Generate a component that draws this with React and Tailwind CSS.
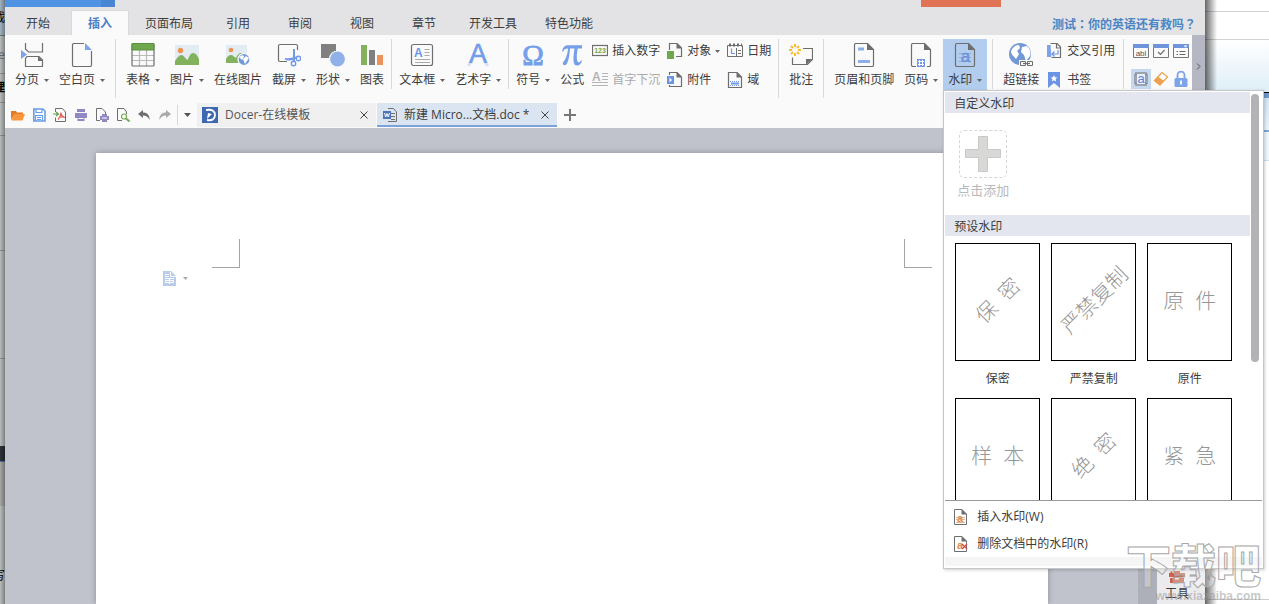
import React from 'react';

const Caret = ({ className = 'text-[#666]' }) => (
  <svg className={className} width="5" height="3" viewBox="0 0 5 3" fill="currentColor">
    <path d="M0 0h5L2.5 3z" />
  </svg>
);

const Icon = ({ children, size = 24, width }) => (
  <svg
    className="shrink-0"
    width={width || size}
    height={size}
    viewBox={`0 0 ${width || size} ${size}`}
    fill="none"
    stroke="#6e6e6e"
    strokeWidth="1.2"
  >
    {children}
  </svg>
);

const icons = {
  pageBreak: (
    <Icon>
      <path d="M5.500 0v6l3 3h14V0M7 13.500h12l3.500 3.500v6.500h-17v-8z" />
      <path d="M18 13v5h5z" fill="#6e6e6e" stroke="none" />
      <path d="M1 7l6 4.500L1 16z" fill="#7da3ea" stroke="none" />
    </Icon>
  ),
  blankPage: (
    <Icon>
      <path d="M14 .5H4A1.500 1.500 0 0 0 2.500 2v20A1.500 1.500 0 0 0 4 23.500h16a1.500 1.500 0 0 0 1.500-1.500V8" />
      <path d="M15 0v7h7z" fill="#7da3ea" stroke="none" />
    </Icon>
  ),
  table: (
    <Icon>
      <path d="M1 12.500h22M1 17.500h22M8.500 7v16M15.500 7v16" stroke="#b9b9b9" />
      <rect x="1" y="1" width="22" height="22" rx="1" />
      <path d="M1 .5h22v6.500H1z" fill="#6ea84c" stroke="#5c8f40" strokeWidth="1" />
    </Icon>
  ),
  picture: (
    <Icon>
      <g stroke="none">
        <path d="M0 2h24v20H0z" fill="#e3ebf3" />
        <circle cx="5.500" cy="7.500" r="2.700" fill="#f09250" />
        <path d="M0 22v-4c2-3 4-6 6.500-6s4 4 6 5c2-4 3-7 5.500-7 3 0 4.500 3 6 6v6z" fill="#83b25f" />
      </g>
    </Icon>
  ),
  onlinePicture: (
    <Icon>
      <g stroke="none">
        <path d="M0 2h21v18H0z" fill="#e3ebf3" />
        <circle cx="5" cy="7" r="2.300" fill="#f09250" />
        <path d="M0 20v-4c2-3 3-4 5-4s3 2 5 3c1-3 3-5 5-5l4 2v8z" fill="#83b25f" />
        <circle cx="18" cy="16.500" r="6" fill="#7299d6" stroke="#fafafa" />
        <path d="M13 14l4-2 1 2-2 3zM17 16l3-3 3 2-2 3-2 3z" fill="#fff" />
      </g>
    </Icon>
  ),
  capture: (
    <Icon>
      <path d="M10 18.500H3A1.500 1.500 0 0 1 1.500 17V3A1.500 1.500 0 0 1 3 1.500h16A1.500 1.500 0 0 1 20.500 3v4" />
      <g stroke="#7299e8" strokeWidth="1.400">
        <path d="M17 6v12M8 15.500c3 2 6 1 11-1" strokeWidth="2" />
        <circle cx="16.500" cy="20.500" r="2.200" />
        <circle cx="21.500" cy="15.500" r="2.200" />
      </g>
    </Icon>
  ),
  shapes: (
    <Icon>
      <path d="M0 1h15v14H0z" fill="#808080" stroke="none" />
      <circle cx="16.500" cy="16" r="8" fill="#8fb0e8" stroke="#fafafa" />
    </Icon>
  ),
  chart: (
    <Icon>
      <g stroke="none">
        <path d="M1 2h6v20H1z" fill="#83b25f" />
        <path d="M9 7h6v15H9z" fill="#808080" />
        <path d="M17 12h6v10h-6z" fill="#ee925c" />
      </g>
    </Icon>
  ),
  textBox: (
    <Icon>
      <rect x="1.500" y="1.500" width="21" height="21" rx="2" />
      <path d="M14.500 6.500h5M14.500 9.500h5M14.500 12.500h5M5 16.500h15M5 19.500h15" stroke="#aaa" strokeWidth="1" />
      <text x="4" y="13.500" fontFamily="Liberation Sans" fontSize="12" fontWeight="700" fill="#6b95e4" stroke="none">A</text>
    </Icon>
  ),
  wordArt: (
    <Icon>
      <text x="12" y="19.500" textAnchor="middle" fontFamily="Liberation Sans" fontSize="27" fill="#739ce9" stroke="#739ce9" strokeWidth=".6">A</text>
      <path d="M3.500 20.500l-1 2.500M20.500 20.500l1 2.500" stroke="#d3dff8" strokeWidth="3" />
    </Icon>
  ),
  symbol: (
    <Icon>
      <text x="12" y="22" textAnchor="middle" fontFamily="Liberation Serif" fontSize="29" fill="#769fea" stroke="#769fea" strokeWidth=".9">Ω</text>
    </Icon>
  ),
  formula: (
    <Icon>
      <path
        d="M2 8.500C3 4 5 2.300 8 2.300h14v3.200h-4.300c-1 5-1.200 10-.4 12.500.8 2 2.700 1.500 3.700-.5h1c-.8 3.500-2.500 5-5 5-4.500 0-4-7-2.500-17H10c-.5 6-1 11-3 15-1.500 2.800-5 2-4-1.200C6 16 7.500 12 8 5.500 5 5.500 4 6.500 3 8.500z"
        fill="#769fea"
        stroke="none"
      />
    </Icon>
  ),
  comment: (
    <Icon>
      <path d="M14 5.500h9.500v11l-5 5h-15v-7" />
      <path d="M17 22v-6h6.500z" fill="#6e6e6e" stroke="none" />
      <path d="M6 1v3M6 10v3M0 7h3M9 7h3M2 3l2 2M8 9l2 2M10 3L8 5M4 9l-2 2" stroke="#fbbd2d" strokeWidth="2" />
    </Icon>
  ),
  headerFooter: (
    <Icon>
      <path d="M15.500.5H4A1.500 1.500 0 0 0 2.500 2v20A1.500 1.500 0 0 0 4 23.500h16a1.500 1.500 0 0 0 1.500-1.500V6.500z" />
      <path d="M15 0v7h7z" fill="#6e6e6e" stroke="none" />
      <path d="M6 6h6M6 18.500h12" stroke="#8caeea" strokeWidth="3" />
    </Icon>
  ),
  pageNumber: (
    <Icon>
      <path d="M7 23.500H4A1.500 1.500 0 0 1 2.500 22V2A1.500 1.500 0 0 1 4 .5h11.500l6 6V22a1.500 1.500 0 0 1-1.500 1.500h-2" />
      <path d="M15 0v7h7z" fill="#6e6e6e" stroke="none" />
      <path d="M8 16h8v8H8z" fill="#7299e8" stroke="none" />
      <path d="M10.500 17v6M13.500 17v6M9 18.500h6M9 21.500h6" stroke="#fff" strokeWidth="1" />
    </Icon>
  ),
  watermark: (
    <Icon>
      <path d="M15.500.5H4A1.500 1.500 0 0 0 2.500 2v20A1.500 1.500 0 0 0 4 23.500h16a1.500 1.500 0 0 0 1.500-1.500V6.500z" />
      <path d="M15 0v7h7z" fill="#6e6e6e" stroke="none" />
      <path d="M6 10.500h12M6 14.500h12M6 18.500h12" stroke="#9aabc6" strokeWidth="1" />
      <text x="12.500" y="19" textAnchor="middle" fontFamily="Liberation Sans" fontSize="17" fill="#6a92dd" stroke="#6a92dd" strokeWidth=".4">a</text>
    </Icon>
  ),
  hyperlink: (
    <Icon>
      <circle cx="11" cy="11" r="11" fill="#7299d6" stroke="none" />
      <path d="M2 8c2-4 5-6 8-6l1 3-3 3 2 3-3 5c-2-3-5-4-5-8zM13 4l5-1c4 4 4 8 3 10l-4 5-2-6-3-3z" fill="#fff" stroke="none" />
      <path d="M10 17h14v7H10z" fill="#fafafa" stroke="none" />
      <path d="M11.500 18.500h5v4h-5zM18.500 18.500h5v4h-5z" strokeWidth="1" />
      <path d="M14 20.500h7" />
    </Icon>
  ),
  insertNumber: (
    <Icon size={16}>
      <rect x=".5" y="2.500" width="15" height="10" />
      <text x="8" y="10" textAnchor="middle" fontFamily="Liberation Sans" fontSize="7" fontWeight="700" fill="#6ea84c" stroke="none">123</text>
    </Icon>
  ),
  dropCap: (
    <Icon size={16}>
      <path d="M10 1.500h6M10 4.500h6M10 7.500h6M0 10.500h16M0 13.500h16" stroke="#b4b4b4" />
      <text x="0" y="9" fontFamily="Liberation Sans" fontSize="12" fontWeight="700" fill="#b4b4b4" stroke="none">A</text>
    </Icon>
  ),
  object: (
    <Icon size={16}>
      <path d="M2.500 7V.5H10L14.500 5v8.500H9" />
      <path d="M9.500 0v5.500H15z" fill="#6e6e6e" stroke="none" />
      <path d="M0 8h7v8H0z" fill="#6ea84c" stroke="none" />
    </Icon>
  ),
  attachment: (
    <Icon size={16}>
      <path d="M2.500 3V.5H10L14.500 5v9.500h-12V13" />
      <path d="M9.500 0v5.500H15z" fill="#6e6e6e" stroke="none" />
      <path d="M0 4h7v8H0z" fill="#6b95e4" stroke="none" />
      <path d="M2.500 5.500v5L5 8z" fill="#fff" stroke="none" />
    </Icon>
  ),
  date: (
    <Icon size={16}>
      <path d="M.5 2.500h15v11H.5zM9.500 5v8M11 7.500h3M11 10.500h3" strokeWidth="1" />
      <path d="M2 2h13" strokeWidth="3" strokeDasharray="2 2" />
      <path d="M4.500 5.500v5H8" stroke="#7299e8" />
    </Icon>
  ),
  field: (
    <Icon size={16}>
      <path d="M1.500.5H10L14.500 5v10.500h-13z" />
      <path d="M9.500 0v5.500H15z" fill="#6e6e6e" stroke="none" />
      <path d="M3 9.500h10M3 13.500h10" stroke="#7299e8" strokeDasharray="1 1" strokeWidth="1" />
      <path d="M4 11.500h8" stroke="#7299e8" strokeWidth="2" />
    </Icon>
  ),
  crossRef: (
    <Icon size={16}>
      <path d="M0 2h9v12H0z" fill="#7da3ea" stroke="none" />
      <path d="M3.500.5H10L13.500 4v10.500h-9" fill="#fafafa" />
      <path d="M9.500 1v4h4" />
      <path d="M11 7v4H5M7.500 8.500L5 11l2.500 2.500" stroke="#6b95e4" />
    </Icon>
  ),
  bookmark: (
    <Icon size={16}>
      <path d="M1 0h12v16l-6-5-6 5z" fill="#6b95e4" stroke="none" />
      <path d="M7 3l1 2.200 2.300.3-1.700 1.600.5 2.400L7 8.300 4.900 9.500l.5-2.400-1.700-1.600L6 5.200z" fill="#fff" stroke="none" />
    </Icon>
  ),
  textField: (
    <Icon size={16}>
      <path d="M.5 1.500h15v13H.5z" stroke="#777" strokeWidth="1" />
      <path d="M0 1h16v4H0z" fill="#6f94dc" stroke="none" />
      <text x="8" y="13" textAnchor="middle" fontFamily="Liberation Sans" fontSize="8" fill="#555" stroke="none">abl</text>
    </Icon>
  ),
  checkField: (
    <Icon size={16}>
      <path d="M.5 1.500h15v13H.5z" stroke="#777" strokeWidth="1" />
      <path d="M0 1h16v4H0z" fill="#6f94dc" stroke="none" />
      <path d="M5 9l2.500 2.500L11.500 7" />
    </Icon>
  ),
  listField: (
    <Icon size={16}>
      <path d="M.5 1.500h15v13H.5z" stroke="#777" strokeWidth="1" />
      <path d="M0 1h16v4H0z" fill="#6f94dc" stroke="none" />
      <path d="M10.500 2.500h4l-2 2z" fill="#fff" stroke="none" />
      <path d="M3.500 8.500H5M6.500 8.500h6M3.500 11.500H5M6.500 11.500h6" stroke="#666" />
    </Icon>
  ),
  fieldShading: (
    <Icon size={16}>
      <rect x="2.500" y="2.500" width="11" height="11" stroke="#6e6e6e" strokeWidth="3" strokeDasharray="1 1" />
      <path d="M4 3h8v10H4z" fill="#e8f0fb" stroke="none" />
      <text x="8" y="12" textAnchor="middle" fontFamily="Liberation Sans" fontSize="13" fill="#5583d4" stroke="none">a</text>
    </Icon>
  ),
  eraser: (
    <Icon size={16}>
      <path d="M9 1.500L14.500 6 7 14 1.500 9.500z" fill="#fff" stroke="#eda24f" strokeLinejoin="round" />
      <path d="M5 5.500L11 10l-4 4.500-6-4.500z" fill="#eda24f" stroke="none" />
    </Icon>
  ),
  lock: (
    <Icon size={16}>
      <path d="M4.500 8V4a3.500 3.500 0 0 1 7 0v4" stroke="#7da3ea" strokeWidth="1.800" />
      <rect x="1.500" y="7" width="13" height="9" rx="1.500" fill="#7da3ea" stroke="none" />
      <path d="M8 9.500v4" stroke="#fff" strokeWidth="1.800" />
    </Icon>
  ),
};

const quickIcons = [
  ['打开', <Icon size={14}><path d="M0 12V3h5l1 1.500h6V6H4z" fill="#e57a24" stroke="none" /><path d="M3.500 6H14l-2.500 6.500H.5z" fill="#f9963c" stroke="none" /></Icon>],
  ['保存', <Icon size={14}><path d="M1.800 1h9L13 3v10H1.800z" stroke="#6b9bea" strokeWidth="1.600" fill="#fff" /><path d="M4 1v3.500h6V1M3.500 13V7.500h7V13M5 9.500h4M5 11.500h4" stroke="#6b9bea" /></Icon>],
  ['输出为PDF', <Icon size={14}><path d="M2.500 4V.5h7l3 3.500v9.500h-10v-4" strokeWidth="1" /><path d="M0 6h5M3 4l2.500 2L3 8" stroke="#5fa052" /><path d="M8 4.500c0 3-1 5-3 7M8 6c.5 2 2 3 4 3.500M6 9.500l5-1" stroke="#e0564d" /></Icon>],
  ['打印', <Icon size={14}><path d="M3 1h8v3H3zM1 5h12v5H1zM3.500 9h7v4h-7z" fill="#8f88c4" stroke="none" /><path d="M4.500 10.500h5" stroke="#fff" strokeWidth="1" /></Icon>],
  ['打印预览', <Icon size={14}><path d="M5 12.500H1.500V.5H7L10.500 4v2" strokeWidth="1" /><path d="M7 6h5v2h2v4h-2v2H7v-2H5V8h2z" fill="#8f88c4" stroke="none" /><path d="M7 10h5" stroke="#fff" strokeWidth="1" /></Icon>],
  ['查找', <Icon size={14}><path d="M6 12.500H1.500V.5H8L10.500 4v2" strokeWidth="1" /><circle cx="8" cy="8.500" r="2.500" stroke="#74aa53" /><path d="M10 10.500l3.500 3" stroke="#74aa53" strokeWidth="2" /></Icon>],
  ['撤销', <Icon size={14}><path d="M6 2L1 6l5 4V7.500c3 0 5 1 6.500 4.500C13 7 10 4.500 6 4.500z" fill="#6e6e6e" stroke="none" /></Icon>],
  ['恢复', <Icon size={14}><path d="M8 2l5 4-5 4V7.500c-3 0-5 1-6.500 4.500C1 7 4 4.500 8 4.500z" fill="#aaa" stroke="none" /></Icon>],
];

const tabs = ['开始', '插入', '页面布局', '引用', '审阅', '视图', '章节', '开发工具', '特色功能'];

const BigButton = ({ icon, label, caret, active }) => (
  <button
    className={`flex h-[51px] flex-col items-center gap-[5px] px-[5px] pt-1 ${active ? 'bg-[#b2cdee]' : ''}`}
  >
    {icons[icon]}
    <span className="flex items-center gap-[5px]">
      {label}
      {caret && <Caret />}
    </span>
  </button>
);

const SmallButton = ({ icon, label, caret, disabled }) => (
  <button disabled={disabled} className={`flex h-4 items-center gap-1 ${disabled ? 'text-[#aaa]' : ''}`}>
    {icons[icon]}
    {label}
    {caret && <Caret />}
  </button>
);

const SmallColumn = ({ children }) => (
  <div className="flex flex-col items-start gap-[13px] pt-1">{children}</div>
);

const Divider = ({ tall }) => <div className={`w-px bg-[#d9d9db] ${tall ? 'h-[59px]' : 'h-[50px]'}`} />;

const TabBar = () => (
  <header className="bg-[#e3e3e5]">
    <div className="flex h-[7px] justify-between">
      <div className="flex w-[110px] bg-[#5193e3]">
        <div className="ml-auto w-3.5 bg-[#4886d4]" />
      </div>
      <div className="mr-[204px] w-20 bg-[#e07355]" />
    </div>
    <nav className="flex h-7 items-end pl-0.5">
      {tabs.map((tab) => (
        <button
          key={tab}
          className={`mx-0.5 h-[25px] min-w-[58px] px-3 pt-0.5 ${
            tab === '插入' ? 'border border-b-0 border-[#d8d8da] bg-[#fafafa] font-bold text-[#4a80c6]' : ''
          }`}
        >
          {tab}
        </button>
      ))}
      <a
        href="#test"
        className="ml-auto flex h-[25px] items-center pr-[9px] pt-0.5 font-['Noto_Sans_CJK_TC',sans-serif] font-bold text-[#4a86c6]"
      >
        测试：你的英语还有救吗？
      </a>
    </nav>
  </header>
);

const presets = [
  { name: '保密', text: '保 密', rotated: true },
  { name: '严禁复制', text: '严禁复制', rotated: true },
  { name: '原件', text: '原 件' },
  { name: '样本', text: '样 本' },
  { name: '绝密', text: '绝 密', rotated: true },
  { name: '紧急', text: '紧 急' },
];

const MenuDocIcon = ({ remove }) => (
  <Icon size={16}>
    <path d="M1.500.5H9L13.500 5v10.500h-12z" strokeWidth="1" />
    <path d="M8.500 0v5.500H14z" fill="#6e6e6e" stroke="none" />
    <text x="7" y="13" textAnchor="middle" fontFamily="Liberation Sans" fontSize="11" fontWeight="700" fill="#e08a45" stroke="none">a</text>
    {remove ? (
      <path d="M9 8l5 5M14 8l-5 5" stroke="#d9493b" />
    ) : (
      <path d="M3 8.500h9M3 10.500h9M3 13.500h9" stroke="#e0a070" strokeWidth=".8" />
    )}
  </Icon>
);

const WatermarkMenu = () => (
  <div className="absolute left-0 top-full z-10 w-[321px] border border-[#c6c6c8] bg-white p-px shadow-[1px_1px_3px_#0003]">
    <div className="flex h-[409px] overflow-hidden border-b border-[#999]">
      <div className="flex-1">
        <h3 className="h-[21px] bg-[#e3e6ee] pl-[9px] pt-px leading-[21px]">自定义水印</h3>
        <div className="flex h-[102px] px-3 pt-[17px]">
          <button className="flex flex-col items-center gap-1 text-[13px] text-[#b8b8ba]">
            <span className="flex size-12 items-center justify-center rounded-[5px] border border-dashed border-[#d6d6d6]">
              <svg width="36" height="36" viewBox="0 0 36 36">
                <path d="M13.500.5h9v13h13v8h-13v14h-9v-14H.5v-8h13z" fill="#d8d8d6" stroke="#c9c9c7" />
              </svg>
            </span>
            点击添加
          </button>
        </div>
        <h3 className="h-[21px] bg-[#e3e6ee] pl-[9px] pt-px leading-[21px]">预设水印</h3>
        <div className="grid grid-cols-[repeat(3,85px)] gap-x-[11px] gap-y-[11px] pl-2.5 pt-[7px]">
          {presets.map((preset) => (
            <button key={preset.name} className="flex flex-col items-center gap-2.5">
              <span className="flex h-[118px] w-full items-center justify-center border border-black pb-1 text-[21px] font-light text-[#979797]">
                <span className={`whitespace-nowrap ${preset.rotated ? '-rotate-45' : ''}`}>
                  {preset.text.split(' ').map((part, i) => (
                    <span key={part} className={i > 0 ? 'ml-[11px]' : ''}>{part}</span>
                  ))}
                </span>
              </span>
              {preset.name}
            </button>
          ))}
        </div>
      </div>
      <div className="w-3 pl-px pt-0.5">
        <div className="h-[268px] w-2 rounded-full bg-[#b3b3b5]" />
      </div>
    </div>
    <div className="pt-0.5">
      <button className="flex h-[27px] w-full items-center gap-2 pl-2">
        <MenuDocIcon />
        插入水印(W)
      </button>
      <button className="flex h-[27px] w-full items-center gap-2 pl-2">
        <MenuDocIcon remove />
        删除文档中的水印(R)
      </button>
      <div className="mb-px h-[9px] bg-[#f5f5f6]" />
    </div>
  </div>
);

const Ribbon = () => (
  <div className="flex bg-[#fafafa]">
    <div className="flex items-start whitespace-nowrap pt-1">
      <div className="flex px-[5px]">
        <BigButton icon="pageBreak" label="分页" caret />
        <BigButton icon="blankPage" label="空白页" caret />
      </div>
      <Divider tall />
      <div className="flex pl-[5px] pr-0.5">
        <BigButton icon="table" label="表格" caret />
        <BigButton icon="picture" label="图片" caret />
        <BigButton icon="onlinePicture" label="在线图片" />
        <BigButton icon="capture" label="截屏" caret />
        <BigButton icon="shapes" label="形状" caret />
        <BigButton icon="chart" label="图表" />
      </div>
      <Divider />
      <div className="flex px-0.5">
        <BigButton icon="textBox" label="文本框" caret />
        <BigButton icon="wordArt" label="艺术字" caret />
      </div>
      <Divider />
      <div className="flex pl-0.5 pr-[7px]">
        <BigButton icon="symbol" label="符号" caret />
        <BigButton icon="formula" label="公式" />
        <div className="flex gap-[7px] pl-[3px]">
          <SmallColumn>
            <SmallButton icon="insertNumber" label="插入数字" />
            <SmallButton icon="dropCap" label="首字下沉" disabled />
          </SmallColumn>
          <SmallColumn>
            <SmallButton icon="object" label="对象" caret />
            <SmallButton icon="attachment" label="附件" />
          </SmallColumn>
          <SmallColumn>
            <SmallButton icon="date" label="日期" />
            <SmallButton icon="field" label="域" />
          </SmallColumn>
        </div>
      </div>
      <Divider tall />
      <div className="flex px-[5px]">
        <BigButton icon="comment" label="批注" />
      </div>
      <Divider tall />
      <div className="flex px-[5px]">
        <BigButton icon="headerFooter" label="页眉和页脚" />
        <BigButton icon="pageNumber" label="页码" caret />
        <div className="relative">
          <BigButton icon="watermark" label="水印" caret active />
          <WatermarkMenu />
        </div>
      </div>
      <Divider />
      <div className="flex pl-[5px] pr-2">
        <BigButton icon="hyperlink" label="超链接" />
        <div className="pl-[3px]">
          <SmallColumn>
            <SmallButton icon="crossRef" label="交叉引用" />
            <SmallButton icon="bookmark" label="书签" />
          </SmallColumn>
        </div>
      </div>
      <Divider />
      <div className="grid grid-cols-3 gap-x-1 gap-y-3 pl-[9px] pt-1">
        <button aria-label="文字型窗体域">{icons.textField}</button>
        <button aria-label="复选框型窗体域">{icons.checkField}</button>
        <button aria-label="下拉型窗体域">{icons.listField}</button>
        <button aria-label="窗体域底纹" className="bg-[#c6d8f0] outline-2 outline-[#c6d8f0]">{icons.fieldShading}</button>
        <button aria-label="清除">{icons.eraser}</button>
        <button aria-label="保护窗体">{icons.lock}</button>
      </div>
    </div>
    <button aria-label="更多" className="ml-auto flex w-[13px] items-center justify-center bg-[#b5b8c2]">
      <svg width="5" height="7" viewBox="0 0 5 7" fill="none" stroke="#555">
        <path d="M1 .5l3 3-3 3" />
      </svg>
    </button>
  </div>
);

const CloseIcon = () => (
  <svg width="8" height="8" viewBox="0 0 8 8" stroke="#444" strokeWidth="1">
    <path d="M.5.5l7 7M7.500.5l-7 7" />
  </svg>
);

const DocumentTabs = () => (
  <div className="flex items-center bg-[#fafafa] pb-px pt-[5px]">
    <div className="flex gap-[7px] pl-1.5 pr-[5px]">
      {quickIcons.map(([label, icon]) => (
        <button key={label} aria-label={label}>{icon}</button>
      ))}
    </div>
    <div className="h-5 w-px bg-[#d9d9db]" />
    <button aria-label="自定义快速访问" className="flex w-[19px] justify-center">
      <svg width="7" height="4" viewBox="0 0 7 4" fill="#555">
        <path d="M0 0h7L3.500 4z" />
      </svg>
    </button>
    <div className="mr-px flex h-6 w-[179px] items-center gap-[7px] bg-[#f0f0f1] pl-[5px] pr-2">
      <svg width="16" height="16" viewBox="0 0 16 16">
        <path d="M0 0h16v16H0z" fill="#3e69b2" />
        <path d="M4 3c6-1 9 1 9 5s-3 6-8 5" fill="none" stroke="#fff" strokeWidth="1.800" />
        <path d="M6 6l4 1-5 5z" fill="#fff" />
      </svg>
      <button className="flex-1 text-left text-[#555]">Docer-在线模板</button>
      <button aria-label="关闭"><CloseIcon /></button>
    </div>
    <div className="flex h-6 w-[180px] items-center gap-[7px] border-b-2 border-[#7ba2d9] bg-[#dbe5f2] pl-1.5 pr-2 pt-0.5">
      <Icon size={14}>
        <path d="M5 .5h5.500l3 3.500v9.500H5M8 5.500h4M8 8.500h4M8 11.500h4" strokeWidth="1" />
        <path d="M0 3h8v8H0z" fill="#4f74b8" stroke="none" />
        <path d="M1.500 5l1.200 4L4 5.500 5.300 9l1.200-4" stroke="#fff" strokeWidth="1" />
      </Icon>
      <button className="flex-1 whitespace-nowrap text-left">新建 Micro...文档.doc *</button>
      <button aria-label="关闭"><CloseIcon /></button>
    </div>
    <button aria-label="新建" className="ml-[7px]">
      <svg width="12" height="12" viewBox="0 0 12 12" stroke="#777" strokeWidth="2">
        <path d="M6 0v12M0 6h12" />
      </svg>
    </button>
  </div>
);

const Workspace = () => (
  <main className="flex flex-1 bg-[#c0c3cc] pl-[91px]">
    <div className="mt-[25px] flex-1 bg-white pt-[86px] shadow-[0_0_6px_#8b8f9c]">
      <div className="flex justify-between px-[116px]">
        <div className="h-[29px] w-7 border-b border-r border-[#a5a5a5]" />
        <div className="h-[29px] w-7 border-b border-l border-[#a5a5a5]" />
      </div>
      <button aria-label="段落布局" className="ml-[67px] mt-[3px] flex items-center gap-[7px]">
        <svg width="13" height="15" viewBox="0 0 13 15">
          <path d="M0 0h8l5 5v10H0z" fill="#b9cdeb" />
          <path d="M7.500 1v4.500H13M2 3.500h4M2 5.500h4M2 7.500h9M2.500 9.500h8v2h-8zM6.500 8v5" fill="none" stroke="#fff" />
        </svg>
        <Caret className="text-[#aaa]" />
      </button>
    </div>
    <div className="w-[90px]" />
    <div className="w-[19px] bg-[#adafb9]" />
    <aside className="flex w-12 flex-col items-center justify-end bg-[#ebebee] pb-0.5">
      <button className="flex flex-col items-center gap-0.5 pl-1 pr-3">
        <svg width="16" height="14" viewBox="0 0 16 14" fill="#c9644b">
          <path d="M5 3V1h6v2h5v4H0V3h1.500V1.500h2V3zM1 8h5v1.500h4V8h5v5H1z" />
        </svg>
        工具
      </button>
    </aside>
  </main>
);

const LeftEdge = () => (
  <div className="relative flex w-[5px] flex-col overflow-hidden bg-[#c4c7c7] text-right text-black">
    <div className="flex h-9 items-center justify-end border-b border-[#777] bg-[#a9bdc9]">裁</div>
    <div className="flex h-[38px] items-center justify-end border-b border-[#999] text-[#777]">e</div>
    <div className="flex h-[29px] items-center justify-end border-b border-[#999] font-bold">理</div>
    <div className="h-[33px] border-b border-[#999]" />
    <div className="h-[115px] border-b border-[#999]" />
    <div className="h-[108px] border-b border-[#999]" />
    <div className="h-[87px]" />
    <div className="h-4 border-b border-[#4c79b0] bg-[#30343c]" />
    <div className="h-[44px] bg-[#b0b0b0]" />
    <div className="flex flex-1 items-end justify-end pb-5">写</div>
    <div className="absolute inset-0 bg-linear-to-r from-black/5 to-black/35" />
  </div>
);

const RightEdge = () => (
  <div className="relative flex w-16 flex-col bg-white">
    <div className="h-3 border-b border-[#cfd3d6]" />
    <div className="h-7 border-b border-[#cfd3d6]" />
    <div className="h-[53px] border-b border-black bg-linear-to-b from-white to-[#deeef7]" />
    <div className="h-[5px] bg-[#6f97c9]" />
    <div className="h-[34px] border-b-2 border-[#7ea6d6] bg-linear-to-b from-[#d4e5f4] to-[#eaf4fb]" />
    <div className="h-[29px] border-b border-[#cfe0ee] bg-[#edf6fc]" />
    <div className="mb-1 flex-1 border-b border-[#ccc]" />
    <div className="absolute inset-y-0 left-0 w-3 bg-linear-to-r from-black/60 to-transparent" />
  </div>
);

const SiteMark = () => (
  <div className="pointer-events-none absolute bottom-0 right-2 z-20 flex flex-col items-end">
    <div className="text-[45px] font-black leading-[52px] text-white/30 [-webkit-text-stroke:1px_#a8a8a8]">
      下载吧
    </div>
    <div className="-mt-1 font-['Liberation_Sans',sans-serif] text-xs font-bold text-[#9999998c]">
      www.xiazaiba.com
    </div>
  </div>
);

const App = () => {
  return (
    <div className="relative flex min-h-screen overflow-hidden font-['Open_Sans','Noto_Sans_CJK_SC',sans-serif] text-xs text-[#3c3c3c]">
      <LeftEdge />
      <div className="flex min-w-0 flex-1 flex-col">
        <TabBar />
        <Ribbon />
        <DocumentTabs />
        <Workspace />
      </div>
      <RightEdge />
      <SiteMark />
    </div>
  );
};

export default App;
